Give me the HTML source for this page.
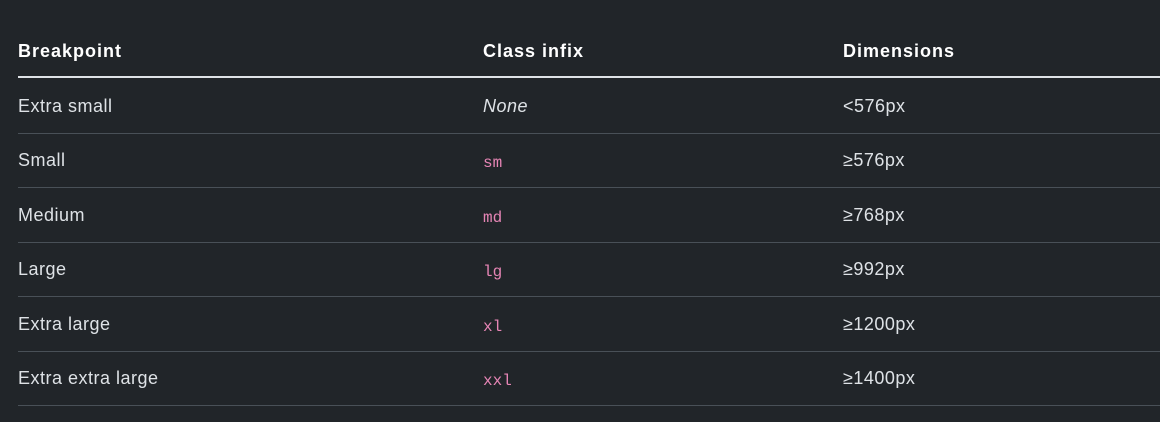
<!DOCTYPE html>
<html><head><style>
html,body{margin:0;padding:0;background:#212529;width:1160px;height:422px;overflow:hidden}
body{font-family:"Liberation Sans",sans-serif;color:#dee2e6;font-size:18px;letter-spacing:0.5px}
.c{position:absolute;white-space:nowrap}
.h{font-weight:bold;color:#fff;letter-spacing:1px}
code{font-family:"Liberation Mono",monospace;font-size:16px;color:#e685b5;letter-spacing:0}
.line{position:absolute;left:18px;right:0;height:1px;background:#495057}
</style></head><body>
<div class="c h" style="left:18px;top:41px">Breakpoint</div>
<div class="c h" style="left:483px;top:41px">Class infix</div>
<div class="c h" style="left:843px;top:41px">Dimensions</div>
<div class="line" style="top:76px;height:2px;background:#dee2e6"></div>

<div class="c" style="left:18px;top:96px">Extra small</div>
<div class="c" style="left:483px;top:96px;font-style:italic">None</div>
<div class="c" style="left:843px;top:96px">&lt;576px</div>
<div class="line" style="top:133px"></div>

<div class="c" style="left:18px;top:150px">Small</div>
<div class="c" style="left:483px;top:151px"><code>sm</code></div>
<div class="c" style="left:843px;top:150px">≥576px</div>
<div class="line" style="top:187px"></div>

<div class="c" style="left:18px;top:205px">Medium</div>
<div class="c" style="left:483px;top:206px"><code>md</code></div>
<div class="c" style="left:843px;top:205px">≥768px</div>
<div class="line" style="top:242px"></div>

<div class="c" style="left:18px;top:259px">Large</div>
<div class="c" style="left:483px;top:260px"><code>lg</code></div>
<div class="c" style="left:843px;top:259px">≥992px</div>
<div class="line" style="top:296px"></div>

<div class="c" style="left:18px;top:314px">Extra large</div>
<div class="c" style="left:483px;top:315px"><code>xl</code></div>
<div class="c" style="left:843px;top:314px">≥1200px</div>
<div class="line" style="top:351px"></div>

<div class="c" style="left:18px;top:368px">Extra extra large</div>
<div class="c" style="left:483px;top:369px"><code>xxl</code></div>
<div class="c" style="left:843px;top:368px">≥1400px</div>
<div class="line" style="top:405px"></div>
</body></html>
